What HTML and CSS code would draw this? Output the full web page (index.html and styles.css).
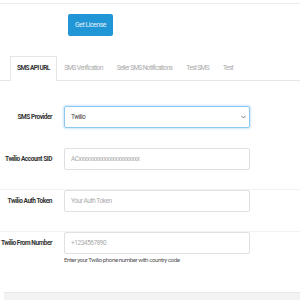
FILE: index.html
```html
<!DOCTYPE html>
<html>
<head>
<meta charset="utf-8">
<link rel="stylesheet" href="styles.css">
</head>
<body>
<div class="page">
  <div class="license">
    <button class="btn">Get License</button>
  </div>
  <div class="tabs">
    <div class="tab active">SMS API URL</div>
    <div class="tab">SMS Verification</div>
    <div class="tab">Seller SMS Notifications</div>
    <div class="tab">Test SMS</div>
    <div class="tab">Test</div>
  </div>
  <form class="form">
    <div class="row">
      <label class="label">SMS Provider</label>
      <div class="field">
        <div class="select">
          <span>Twilio</span>
          <svg class="chev" width="5" height="4" viewBox="0 0 5 4"><path d="M0.5 0.8 L2.5 3 L4.5 0.8" fill="none" stroke="#777" stroke-width="0.9"/></svg>
        </div>
      </div>
    </div>
    <div class="row sep">
      <label class="label">Twilio Account SID</label>
      <div class="field"><div class="input ph">ACxxxxxxxxxxxxxxxxxxxxxx</div></div>
    </div>
    <div class="row sep">
      <label class="label">Twilio Auth Token</label>
      <div class="field"><div class="input ph">Your Auth Token</div></div>
    </div>
    <div class="row">
      <label class="label">Twilio From Number</label>
      <div class="field">
        <div class="input ph">+1234567890</div>
        <div class="help">Enter your Twilio phone number with country code</div>
      </div>
    </div>
  </form>
  <div class="footer"></div>
</div>
</body>
</html>
```
FILE: styles.css
```css
* { box-sizing: border-box; }
html, body { margin: 0; padding: 0; background: #fff; }
body {
  font-family: "Roboto", "Liberation Sans", sans-serif;
  color: #333;
  width: 300px;
  height: 300px;
  overflow: hidden;
  letter-spacing: -0.45px;
}
.page {
  margin-top: 3px;
  border-top: 1px solid #ececec;
  height: 297px;
  display: flex;
  flex-direction: column;
}
.license {
  padding: 10px 0 0 68px;
}
.btn {
  display: block;
  width: 45px;
  height: 22px;
  background: #2196d6;
  border: none;
  border-radius: 2px;
  color: #e3f1fb;
  font-family: inherit;
  font-size: 7px;
  letter-spacing: -0.5px;
  padding: 0;
}
.tabs {
  margin-top: 20px;
  display: flex;
  padding-left: 10px;
  border-bottom: 1px solid #e6e6e6;
  height: 25px;
  white-space: nowrap;
}
.tab {
  font-size: 6.5px;
  letter-spacing: -0.6px;
  color: #aaa;
  padding: 0 5.5px;
  margin-right: 1px;
  line-height: 23px;
  border: 1px solid transparent;
  border-bottom: none;
}
.tab.active {
  color: #333;
  font-weight: bold;
  border-color: #e6e6e6;
  background: #fff;
  height: 25px;
  margin-bottom: -1px;
  padding: 0 6px;
}
.form {
  margin-top: 25px;
}
.row {
  display: flex;
  align-items: flex-start;
  height: 42px;
}
.row.sep { border-bottom: 1px solid #f2f2f2; }
.label {
  width: 64px;
  padding-right: 12px;
  text-align: right;
  font-size: 6.5px;
  font-weight: bold;
  color: #333;
  line-height: 22px;
  white-space: nowrap;
}
.field {
  width: 186px;
}
.select, .input {
  height: 22px;
  border: 1px solid #e0e0e0;
  border-radius: 2px;
  font-size: 6.5px;
  padding: 0 6px;
  display: flex;
  align-items: center;
  justify-content: space-between;
  color: #444;
  white-space: nowrap;
}
.select {
  border-color: #8cc8f0;
  box-shadow: 0 0 2px 1px #cde7f9;
}
.ph { color: #aaa; }
.chev { margin-right: -3px; }
.help {
  font-size: 6.2px;
  color: #555;
  margin-top: 2px;
  white-space: nowrap;
}
.footer {
  margin-top: auto;
  margin-left: 4px;
  height: 8px;
  background: #f3f3f3;
  border-top: 1px solid #e8e8e8;
}
```
